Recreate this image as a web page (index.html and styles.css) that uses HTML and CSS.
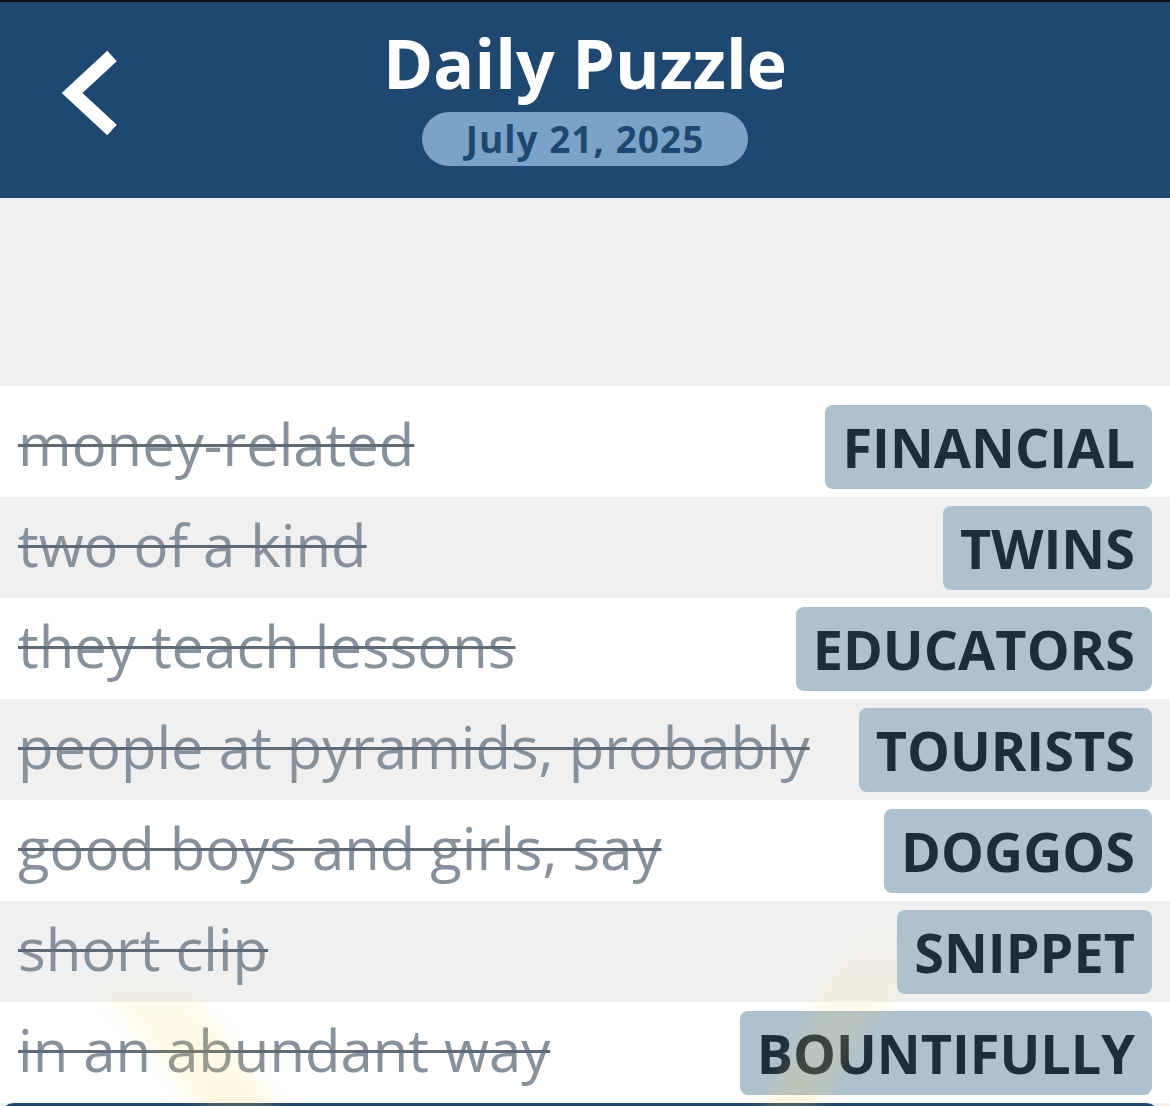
FILE: index.html
```html
<!DOCTYPE html>
<html lang="en">
<head>
    <meta charset="UTF-8">
    <meta name="viewport" content="width=device-width, initial-scale=1.0">
    <title>Daily Puzzle</title>
    <link rel="stylesheet" href="styles.css">
</head>
<body>
    <header class="topbar">
        <a href="#" class="back" aria-label="Back">
            <svg width="60" height="90" viewBox="0 0 60 90">
                <polyline points="54,8 14,45 54,82" fill="none" stroke="#ffffff" stroke-width="14" stroke-linecap="butt" stroke-linejoin="miter"/>
            </svg>
        </a>
        <div class="title-block">
            <h1>Daily Puzzle</h1>
            <span class="date-pill">July 21, 2025</span>
        </div>
    </header>

    <div class="spacer"></div>

    <ul class="answers">
        <li class="row"><span class="clue">money-related</span><span class="word">FINANCIAL</span></li>
        <li class="row"><span class="clue">two of a kind</span><span class="word">TWINS</span></li>
        <li class="row"><span class="clue">they teach lessons</span><span class="word">EDUCATORS</span></li>
        <li class="row"><span class="clue">people at pyramids, probably</span><span class="word">TOURISTS</span></li>
        <li class="row"><span class="clue">good boys and girls, say</span><span class="word">DOGGOS</span></li>
        <li class="row"><span class="clue">short clip</span><span class="word">SNIPPET</span></li>
        <li class="row"><span class="clue">in an abundant way</span><span class="word">BOUNTIFULLY</span></li>
    </ul>

    <div class="bottom-btn"></div>

    <!-- faint sunburst peeking up from below -->
    <svg class="rays" width="1170" height="1106" viewBox="0 0 1170 1106">
        <defs>
            <linearGradient id="rayFade" x1="0" y1="920" x2="0" y2="1106" gradientUnits="userSpaceOnUse">
                <stop offset="0" stop-color="#ffd54a" stop-opacity="0"/>
                <stop offset="0.4" stop-color="#ffd54a" stop-opacity="0.1"/>
                <stop offset="1" stop-color="#ffd54a" stop-opacity="0.18"/>
            </linearGradient>
            <filter id="soft"><feGaussianBlur stdDeviation="8"/></filter>
        </defs>
        <g filter="url(#soft)" fill="url(#rayFade)">
            <polygon points="555,1500 855,930 935,930"/>
            <polygon points="555,1500 100,990 190,990"/>
        </g>
    </svg>
</body>
</html>
```

FILE: styles.css
```css
body {
    margin: 0;
    font-family: "Open Sans", "Liberation Sans", sans-serif;
    background: #f0f0f0;
    height: 1106px;
    overflow: hidden;
    position: relative;
}
.topbar {
    height: 196px;
    background: #1f4870;
    border-top: 2px solid #111;
    display: flex;
    align-items: flex-start;
    position: relative;
}
.back {
    position: absolute;
    left: 58px;
    top: 46px;
    display: block;
}
.title-block {
    flex: 1;
    display: flex;
    flex-direction: column;
    align-items: center;
    padding-top: 20px;
}
h1 {
    margin: 0;
    color: #ffffff;
    font-size: 68px;
    font-weight: 700;
    line-height: 82px;
}
.date-pill {
    margin-top: 8px;
    background: #7ba3c8;
    color: #1f4870;
    font-weight: 700;
    font-size: 37px;
    letter-spacing: 1px;
    line-height: 54px;
    padding: 0 44px;
    border-radius: 27px;
}
.spacer {
    height: 188px;
}
.answers {
    list-style: none;
    margin: 0;
    padding: 10px 0 0;
    background: #ffffff;
}
.row {
    height: 101px;
    display: flex;
    align-items: center;
    justify-content: space-between;
    padding: 0 18px;
    box-sizing: border-box;
    background: #ffffff;
}
.row:nth-child(even) {
    background: #f0f0f0;
}
.clue {
    color: #87919b;
    font-size: 58px;
    text-decoration: line-through;
    text-decoration-color: #5e6a76;
    text-decoration-thickness: 3px;
    margin-top: -6px;
}
.word {
    background: #adc1cf;
    color: #1c2d3e;
    font-weight: 700;
    font-size: 54px;
    line-height: 84px;
    padding: 0 17px;
    border-radius: 8px;
    margin-top: 1px;
}
.bottom-btn {
    margin: 0 10px 0 0;
    height: 40px;
    background: #1f4870;
    border-radius: 14px 14px 0 0;
}
.rays {
    position: absolute;
    left: 0;
    top: 0;
    pointer-events: none;
}
```
